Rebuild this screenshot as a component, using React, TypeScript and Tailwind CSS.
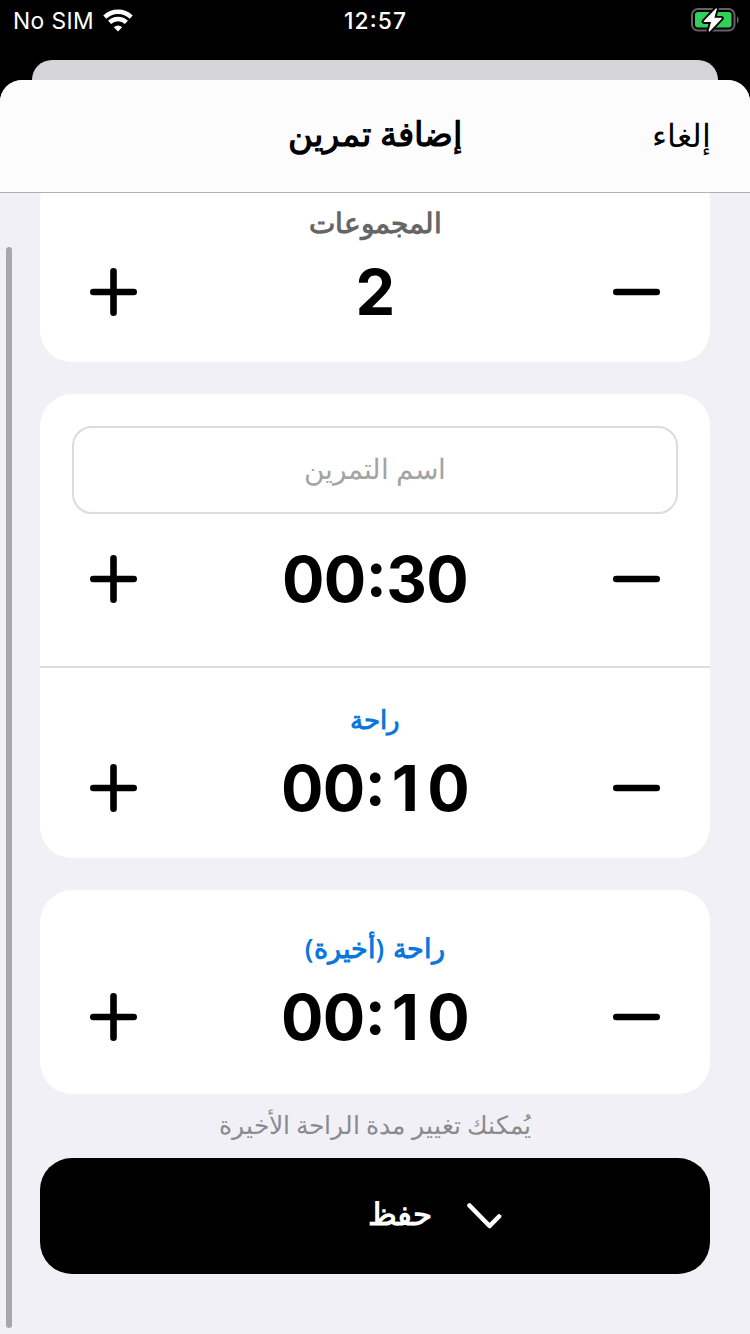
import React from 'react';

const plus = 'M3.3 24H43.7M23.5 3.3V44.7';
const minus = 'M3.3 24H43.7';

function StepIcon({ d, label }: { d: string; label: string }) {
  return (
    <button aria-label={label} className="h-12 w-[47px]">
      <svg className="h-12 w-[47px]" viewBox="0 0 47 48" fill="none" stroke="#000" strokeWidth="6.6" strokeLinecap="round">
        <path d={d} />
      </svg>
    </button>
  );
}

function Digits({ value }: { value: string }) {
  return (
    <span className="text-[63px] leading-none font-bold tracking-[-0.6px] whitespace-nowrap">
      {value.split(/([1:])/).map((part, i) => {
        if (part === '1') {
          return <span key={i} className="inline-block w-[42px] pr-[2px] text-center">1</span>;
        }
        if (part === ':') {
          return <span key={i} className="align-[6px] leading-[0]">:</span>;
        }
        return part;
      })}
    </span>
  );
}

function Stepper({ value }: { value: string }) {
  return (
    <div dir="ltr" className="flex h-16 items-center justify-between px-[50px]">
      <StepIcon d={plus} label="+" />
      <Digits value={value} />
      <StepIcon d={minus} label="−" />
    </div>
  );
}

function Label({ children, className }: { children: React.ReactNode; className: string }) {
  return (
    <div className={`flex h-10 items-center justify-center font-['Noto_Sans',sans-serif] leading-10 font-semibold whitespace-nowrap ${className}`}>
      {children}
    </div>
  );
}

function StatusBar() {
  return (
    <div className="grid h-[60px] grid-cols-3 items-start text-white">
      <div className="flex h-10 items-center pl-[13px]">
        <span className="pt-[2px] text-[22.8px] tracking-[0.4px]">No SIM</span>
        <svg className="ml-[9px] h-[23px] w-[30px]" viewBox="0 0 30 23" fill="none" stroke="#fff" strokeWidth="4.4">
          <path d="M1.8 8.1A19 19 0 0 1 28.2 8.1" />
          <path d="M6.6 13.4A12 12 0 0 1 23.4 13.4" />
          <path d="M15 22.4L10.8 18.2A6.3 6.3 0 0 1 19.2 18.2Z" fill="#fff" stroke="none" />
        </svg>
      </div>
      <div className="flex h-10 items-center justify-center">
        <span className="pt-[2px] pl-[1px] text-[22.8px] font-medium tracking-[1.1px]">
          12<span className="align-[2px] leading-[0]">:</span>57
        </span>
      </div>
      <div className="flex h-10 items-center justify-end pr-[11px]">
        <svg className="h-[26px] w-[48px]" viewBox="0 0 48 26">
          <rect x="1" y="2" width="42.5" height="21.6" rx="6" fill="none" stroke="#636366" strokeWidth="2" />
          <rect x="4" y="5" width="36.5" height="15.6" rx="3" fill="#30d158" />
          <path d="M46 9.2C48.2 10.5 48.2 15.1 46 16.4Z" fill="#636366" />
          <path d="M25.3 1.8L13.2 14.4H20.8L18.2 24L30.2 11.4H22.6Z" fill="#fff" stroke="#000" strokeWidth="5" strokeLinejoin="round" />
          <path d="M25.3 1.8L13.2 14.4H20.8L18.2 24L30.2 11.4H22.6Z" fill="#fff" stroke="#fff" strokeWidth="1.2" strokeLinejoin="round" />
        </svg>
      </div>
    </div>
  );
}

export default function App() {
  return (
    <div dir="ltr" className="flex h-[1334px] w-[750px] flex-col overflow-hidden bg-black font-['Inter',sans-serif] text-black">
      <StatusBar />
      <div className="mx-8 h-5 shrink-0 rounded-t-[20px] bg-[#d5d4d9]" />
      <div dir="rtl" className="relative flex min-h-0 flex-1 flex-col overflow-hidden rounded-t-[22px] bg-[#f1f0f6]">
        <header className="relative z-10 grid h-[113px] shrink-0 grid-cols-[1fr_auto_1fr] items-center border-b border-[#b1b1b4] bg-[#fcfcfd] px-[39px] font-['Noto_Sans',sans-serif]">
          <span className="pb-[2px] text-[32px]">إلغاء</span>
          <h1 className="pb-[5px] text-[34px] font-semibold">إضافة تمرين</h1>
          <span />
        </header>
        <main className="flex flex-col px-10">
          <section className="-mt-6 flex h-[193px] flex-col rounded-[32px] bg-white pt-[33px]">
            <Label className="text-[28px] text-[#666666]">المجموعات</Label>
            <div className="mt-[18px]"><Stepper value="2" /></div>
          </section>
          <section className="mt-8 flex h-[464px] flex-col rounded-[32px] bg-white">
            <div className="mx-8 mt-8 flex h-[88px] items-center justify-center rounded-[20px] border-2 border-[#dcdcdc] pb-[3px] font-['Noto_Sans',sans-serif] text-[28.4px] text-[#a3a3a3]">
              اسم التمرين
            </div>
            <div className="mt-[33px]"><Stepper value="00:30" /></div>
            <div className="mt-[55px] h-[2px] bg-[#dcdcdd]" />
            <Label className="mt-[31px] text-[26.2px] text-[#0a77dc]">راحة</Label>
            <div className="mt-[17px]"><Stepper value="00:10" /></div>
          </section>
          <section className="mt-8 flex h-[204px] flex-col rounded-[32px] bg-white pt-[38px]">
            <Label className="text-[26.8px] [word-spacing:2px] text-[#0a77dc]">راحة (أخيرة)</Label>
            <div className="mt-[17px]"><Stepper value="00:10" /></div>
          </section>
          <p className="flex h-16 items-center justify-center pb-[3px] font-['Noto_Sans',sans-serif] text-[24.7px] whitespace-nowrap text-[#8a8a8e]">
            يُمكنك تغيير مدة الراحة الأخيرة
          </p>
          <button className="flex h-[116px] items-center rounded-[32px] bg-black pr-[208px] font-['Noto_Sans',sans-serif] text-[30.5px] font-semibold text-white">
            <svg className="h-[28px] w-[36px]" viewBox="0 0 36 28" fill="none" stroke="#fff" strokeWidth="4.6" strokeLinecap="round" strokeLinejoin="round">
              <path d="M3.5 3.5L23.6 24L33 14.5" />
            </svg>
            <span className="mr-[34px] pb-[4px]">حفظ</span>
          </button>
        </main>
        <div className="absolute top-[167px] left-[6px] h-[1081px] w-[6px] rounded-full bg-[#a7a6ab]" />
      </div>
    </div>
  );
}
